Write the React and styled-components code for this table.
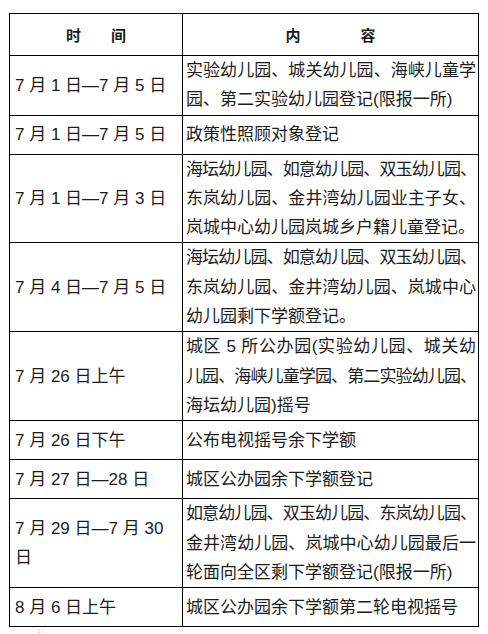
import React from "react";
import styled, { createGlobalStyle } from "styled-components";

const Global = createGlobalStyle`
  html, body { margin: 0; padding: 0; background: #fff; }
  body {
    font-family: "Liberation Sans", "Noto Sans CJK SC", sans-serif;
    color: #1c1c1c;
  }
`;

const Page = styled.div`
  width: 488px;
  padding: 13px 0 0 9px;
  box-sizing: border-box;
`;

const Table = styled.table`
  width: 470px;
  border-collapse: collapse;
  table-layout: fixed;
`;

const HeadCell = styled.th`
  width: ${p => p.$w || "auto"};
  height: 38px;
  padding: 3px 0 0;
  border: 1px solid #000;
  font-size: 15px;
  font-weight: bold;
  text-align: center;
  vertical-align: middle;
  white-space: pre;
  line-height: 20px;
`;

const Row = styled.tr`
  height: 39px;
`;

const Cell = styled.td`
  padding: 0 ${p => (p.$date ? "4px 0 5px" : "2px 0 3px")};
  border: 1px solid #000;
  font-size: 17px;
  line-height: 29.3px;
  vertical-align: middle;
  text-align: left;
`;

const Line = styled.span`
  display: block;
  white-space: nowrap;
  text-align-last: ${p => (p.$justify ? "justify" : "auto")};
  letter-spacing: ${p => (p.$tight ? "-1px" : "0")};
`;

const Note = styled.div`
  margin: 1px 0 0 28px;
  font-size: 6px;
  line-height: 6px;
  color: #c4c4c4;
`;

const rows = [
  {
    date: ["7 月 1 日—7 月 5 日"],
    lines: [
      { t: "实验幼儿园、城关幼儿园、海峡儿童学", j: true },
      { t: "园、第二实验幼儿园登记(限报一所)" },
    ],
  },
  { date: ["7 月 1 日—7 月 5 日"], lines: [{ t: "政策性照顾对象登记" }] },
  {
    date: ["7 月 1 日—7 月 3 日"],
    lines: [
      { t: "海坛幼儿园、如意幼儿园、双玉幼儿园、", j: true, tight: true },
      { t: "东岚幼儿园、金井湾幼儿园业主子女、", j: true },
      { t: "岚城中心幼儿园岚城乡户籍儿童登记。" },
    ],
  },
  {
    date: ["7 月 4 日—7 月 5 日"],
    lines: [
      { t: "海坛幼儿园、如意幼儿园、双玉幼儿园、", j: true, tight: true },
      { t: "东岚幼儿园、金井湾幼儿园、岚城中心", j: true },
      { t: "幼儿园剩下学额登记。" },
    ],
  },
  {
    date: ["7 月 26 日上午"],
    lines: [
      { t: "城区 5 所公办园(实验幼儿园、城关幼", j: true },
      { t: "儿园、海峡儿童学园、第二实验幼儿园、", j: true, tight: true },
      { t: "海坛幼儿园)摇号" },
    ],
  },
  { date: ["7 月 26 日下午"], lines: [{ t: "公布电视摇号余下学额" }] },
  { date: ["7 月 27 日—28 日"], lines: [{ t: "城区公办园余下学额登记" }] },
  {
    date: ["7 月 29 日—7 月 30", "日"],
    lines: [
      { t: "如意幼儿园、双玉幼儿园、东岚幼儿园、", j: true, tight: true },
      { t: "金井湾幼儿园、岚城中心幼儿园最后一", j: true },
      { t: "轮面向全区剩下学额登记(限报一所)" },
    ],
  },
  { date: ["8 月 6 日上午"], lines: [{ t: "城区公办园余下学额第二轮电视摇号" }] },
];

export default function App() {
  return (
    <Page>
      <Global />
      <Table>
        <thead>
          <tr>
            <HeadCell $w="172px">{"时　　间"}</HeadCell>
            <HeadCell>{"内　　　　容"}</HeadCell>
          </tr>
        </thead>
        <tbody>
          {rows.map((r, i) => (
            <Row key={i}>
              <Cell $date>
                {r.date.map((d, k) => (
                  <Line key={k}>{d}</Line>
                ))}
              </Cell>
              <Cell>
                {r.lines.map((l, k) => (
                  <Line key={k} $justify={l.j} $tight={l.tight}>
                    {l.t}
                  </Line>
                ))}
              </Cell>
            </Row>
          ))}
        </tbody>
      </Table>
      <Note>1 /</Note>
    </Page>
  );
}
